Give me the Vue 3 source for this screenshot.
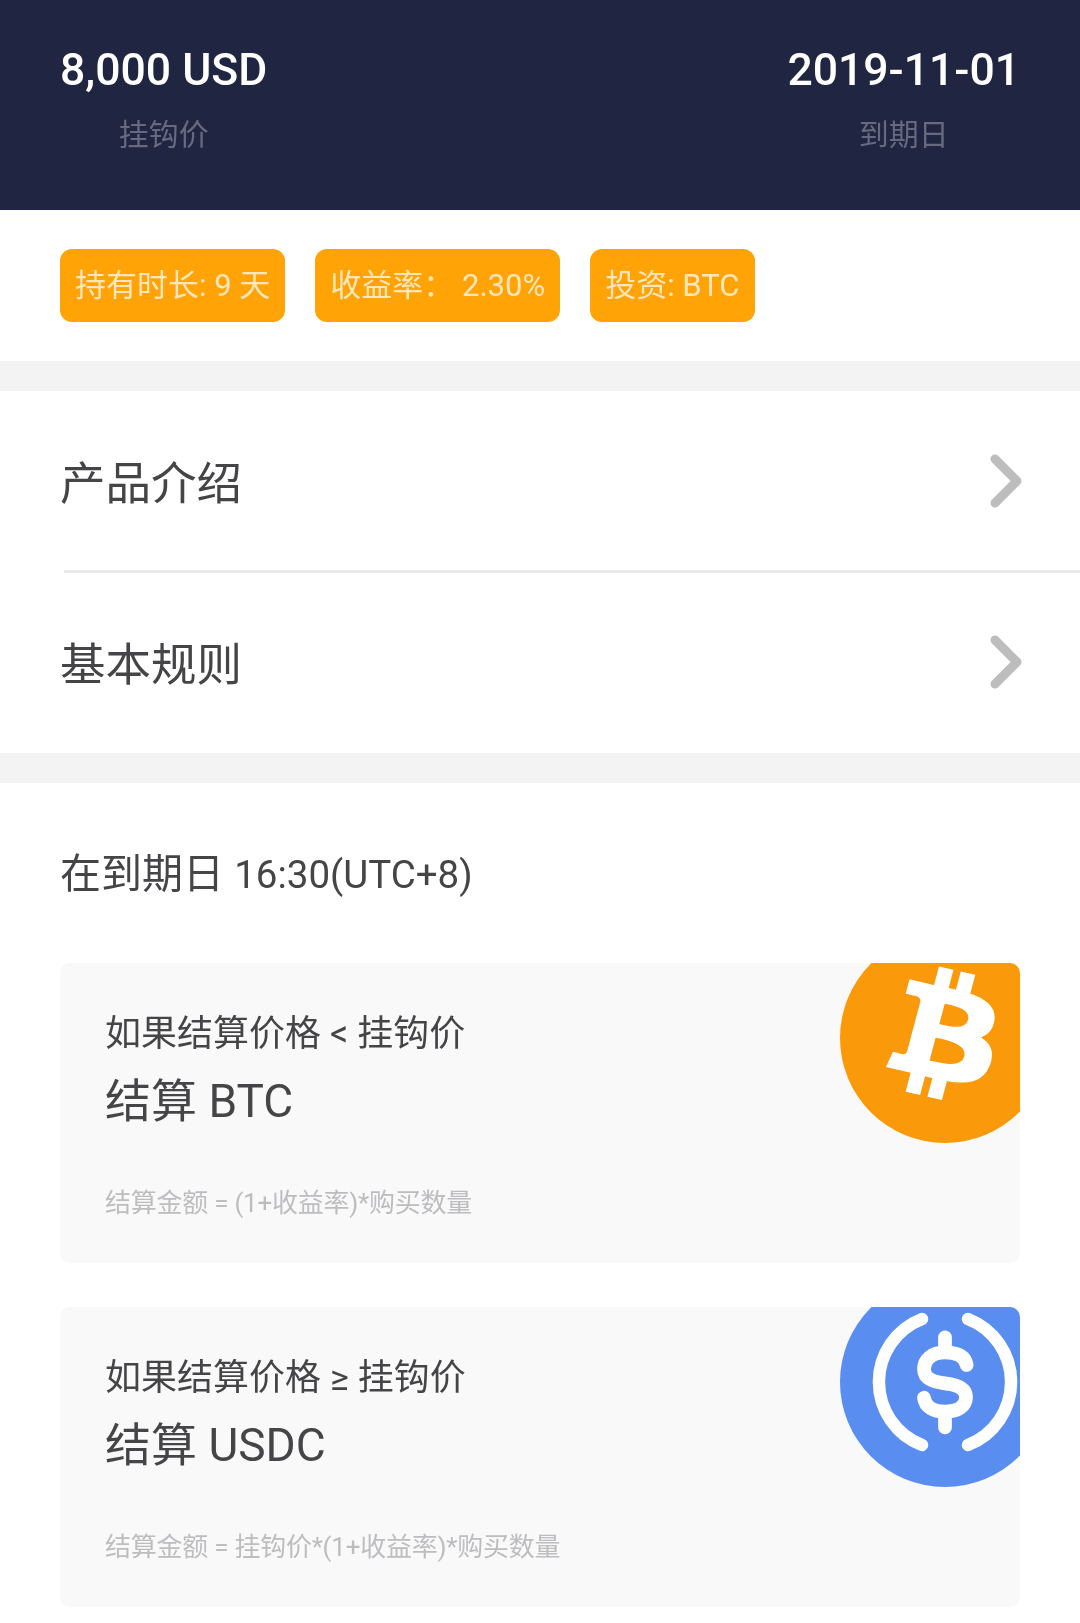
<template>
  <div class="page">
    <header class="hero">
      <div class="hero-col" v-for="item in heroItems" :key="item.label">
        <div class="hero-value">{{ item.value }}</div>
        <div class="hero-label">{{ item.label }}</div>
      </div>
    </header>

    <section class="chips">
      <span class="chip" v-for="chip in chips" :key="chip">{{ chip }}</span>
    </section>

    <section class="menu">
      <div class="menu-row" v-for="row in menuRows" :key="row">
        <span class="menu-text">{{ row }}</span>
        <svg class="chevron" viewBox="0 0 34 56" width="34" height="56" fill="none" stroke="#bdbdbd" stroke-width="9"
          stroke-linecap="round" stroke-linejoin="round">
          <path d="M6 6l22 22L6 50" />
        </svg>
      </div>
    </section>

    <section class="settle">
      <h2 class="settle-title">在到期日 <span class="settle-time">16:30(UTC+8)</span></h2>

      <div class="card">
        <div class="card-cond">如果结算价格 &lt; 挂钩价</div>
        <div class="card-result">结算 BTC</div>
        <div class="card-note">结算金额 = (1+收益率)*购买数量</div>
        <svg class="coin" viewBox="0 0 32 32" width="210" height="210">
          <circle cx="16" cy="16" r="16" fill="#fa990a" />
          <path fill="#fff" stroke="#fff" stroke-width=".35" transform="translate(-1.47 -.7) scale(1.07 1)"
            d="M23.189 14.02c.314-2.096-1.283-3.223-3.465-3.975l.708-2.84-1.728-.43-.69 2.765c-.454-.114-.92-.22-1.385-.326l.695-2.783L15.596 6l-.708 2.839c-.376-.086-.746-.17-1.104-.26l.002-.009-2.384-.595-.46 1.846s1.283.294 1.256.312c.7.175.826.638.805 1.006l-.806 3.235c.048.012.11.03.18.057l-.183-.045-1.13 4.532c-.086.212-.303.531-.793.41.018.025-1.256-.313-1.256-.313l-.858 1.978 2.25.561c.418.105.828.215 1.231.318l-.715 2.872 1.727.43.708-2.84c.472.127.93.245 1.378.357l-.706 2.828 1.728.43.715-2.866c2.948.558 5.164.333 6.097-2.333.752-2.146-.037-3.385-1.588-4.192 1.13-.26 1.98-1.003 2.207-2.538zm-3.95 5.538c-.533 2.147-4.148.986-5.32.695l.95-3.805c1.172.293 4.929.872 4.37 3.11zm.535-5.569c-.487 1.953-3.495.96-4.47.717l.86-3.45c.975.243 4.118.696 3.61 2.733z" />
        </svg>
      </div>

      <div class="card">
        <div class="card-cond">如果结算价格 ≥ 挂钩价</div>
        <div class="card-result">结算 USDC</div>
        <div class="card-note">结算金额 = 挂钩价*(1+收益率)*购买数量</div>
        <svg class="coin" viewBox="0 0 32 32" width="210" height="210">
          <circle cx="16" cy="16" r="16" fill="#5a8df0" />
          <g fill="none" stroke="#fff" stroke-linecap="round" stroke-linejoin="round">
            <path stroke-width="1.9" d="M12.5 6.4A10.3 10.3 0 0 0 12.5 25.6M19.5 6.4A10.3 10.3 0 0 1 19.5 25.6" />
            <path stroke-width="2.1"
              d="M19.3 13.4C19 11.9 17.6 11.5 16 11.5 14 11.5 12.8 12.6 12.8 14 12.8 15.6 14.4 16 16 16.2 17.8 16.4 19.2 16.9 19.2 18.3 19.2 19.7 18 20.5 16 20.5 14.2 20.5 13 19.8 12.8 18.4M16 9.2V11.5M16 20.5V22.9" />
          </g>
        </svg>
      </div>
    </section>
  </div>
</template>

<script setup>
const heroItems = [
  { value: '8,000 USD', label: '挂钩价' },
  { value: '2019-11-01', label: '到期日' }
]
const chips = ['持有时长: 9 天', '收益率： 2.30%', '投资: BTC']
const menuRows = ['产品介绍', '基本规则']
</script>

<style>
html,
body {
  margin: 0;
  background: #fff;
}
</style>

<style scoped>
.page {
  width: 1080px;
  height: 1623px;
  overflow: hidden;
  background: #fff;
  font-family: Roboto, "Noto Sans CJK SC", sans-serif;
  color: #454547;
  filter: blur(0.5px);
}

.hero {
  height: 210px;
  box-sizing: border-box;
  padding: 41px 60px 0;
  display: flex;
  justify-content: space-between;
  background: #202542;
}

.hero-col {
  display: flex;
  flex-direction: column;
  align-items: center;
}

.hero-value {
  font-size: 44.5px;
  line-height: 58px;
  font-weight: 500;
  color: #fff;
}

.hero-label {
  margin-top: 16px;
  font-size: 30px;
  line-height: 40px;
  color: #666a7e;
}

.chips {
  height: 181px;
  box-sizing: border-box;
  padding: 39px 0 0 60px;
  display: flex;
  align-items: flex-start;
  gap: 30px;
  border-bottom: 30px solid #f3f3f4;
}

.chip {
  height: 73px;
  line-height: 73px;
  padding: 0 15px;
  border-radius: 12px;
  background: #ffa307;
  color: #ffe6bb;
  font-size: 31px;
  white-space: nowrap;
}

.menu-row {
  height: 181px;
  display: flex;
  align-items: center;
  justify-content: space-between;
  padding: 0 57px 0 60px;
  font-size: 45.5px;
  position: relative;
}

.menu-text {
  margin-top: -4px;
}

.menu-row + .menu-row::before {
  content: "";
  position: absolute;
  left: 64px;
  right: 0;
  top: -2px;
  height: 3px;
  background: #e9e9ea;
}

.chevron {
  flex: none;
  margin-top: -2px;
}

.settle {
  border-top: 30px solid #f3f3f4;
  padding: 0 60px;
}

.settle-title {
  margin: 0;
  padding: 65px 0 62px;
  font-size: 41px;
  line-height: 52px;
  font-weight: 400;
}

.settle-time {
  font-size: 38.5px;
}

.card {
  position: relative;
  height: 300px;
  box-sizing: border-box;
  padding: 47px 45px 0;
  margin-bottom: 44px;
  border-radius: 10px;
  background: #f9f9fa;
  overflow: hidden;
}

.card-cond {
  font-size: 36px;
  line-height: 48px;
}

.card-result {
  margin-top: 13px;
  font-size: 46px;
  line-height: 60px;
}

.card-note {
  margin-top: 54px;
  font-size: 26px;
  line-height: 36px;
  letter-spacing: -0.25px;
  color: #bdbdbf;
}

.coin {
  position: absolute;
  left: 780px;
  top: -30px;
}
</style>
